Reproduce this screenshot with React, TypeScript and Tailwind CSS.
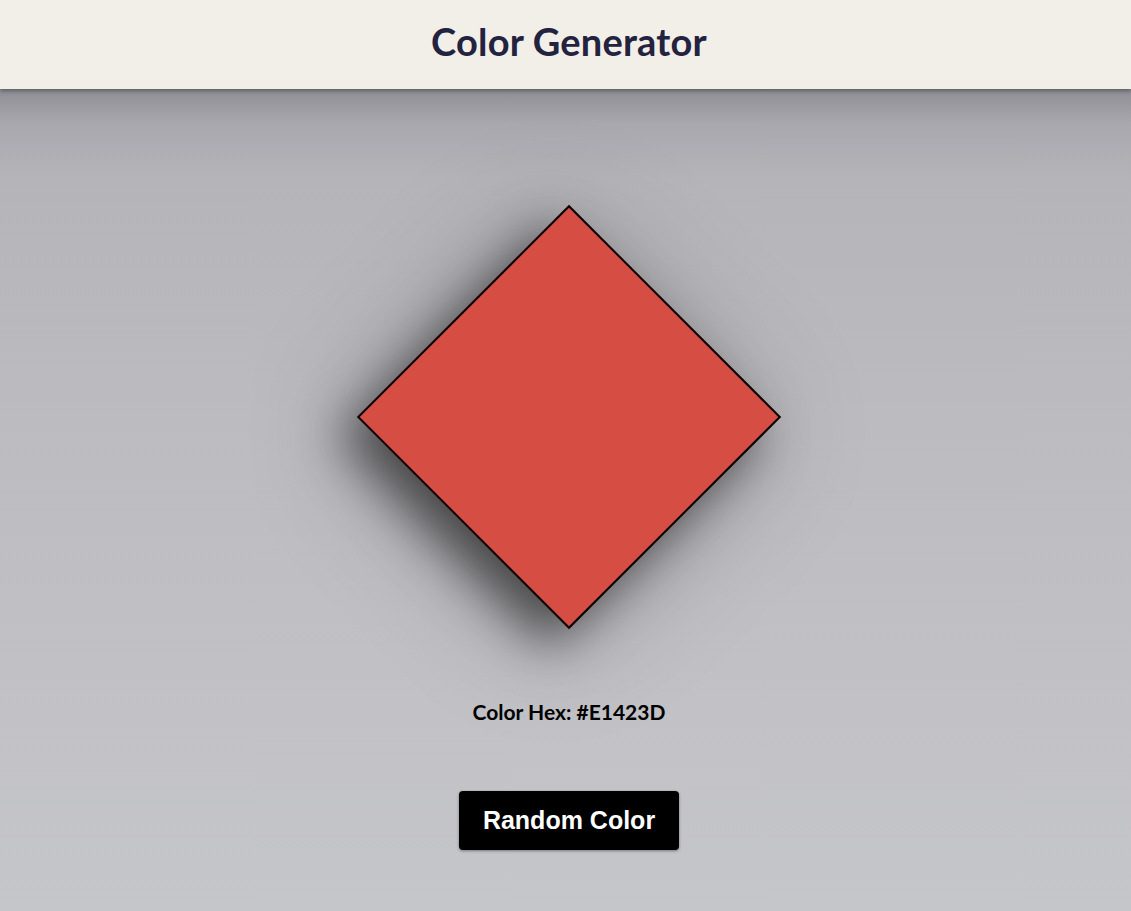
import React from "react";

export default function App() {
  return (
    <div className="min-h-[911px] w-full flex flex-col" style={{ fontFamily: "Lato, 'Noto Sans', sans-serif" }}>
      <header className="h-[89px] pl-[7px] bg-[#f1efe7] flex items-center justify-center shadow-[0_2px_4px_rgba(0,0,0,0.35)] relative z-10">
        <h1 className="text-[38px] font-bold text-[#23223f] tracking-[0.2px] leading-none pb-[7px]">Color Generator</h1>
      </header>
      <main className="flex-1 pl-[7px] flex flex-col items-center bg-[linear-gradient(to_bottom,#8e8e95_0px,#a9a8ae_35px,#b5b4b9_90px,#bcbbc0_330px,#c5c6ca_822px)]">
        <div className="mt-[178px] w-[300px] h-[300px] rotate-45 bg-[#d64d43] border-2 border-black shadow-[0_28px_50px_rgba(0,0,0,0.55),0_20px_120px_rgba(0,0,0,0.25)]" />
        <p className="mt-[134px] text-[21px] font-bold text-black leading-none">Color Hex: #E1423D</p>
        <button className="mt-[69px] w-[220px] h-[59px] bg-black text-white rounded-[4px] text-[25px] font-bold shadow-[0_1px_3px_rgba(0,0,0,0.4)]" style={{ fontFamily: "'Liberation Sans', Arial, sans-serif" }}>
          Random Color
        </button>
      </main>
    </div>
  );
}
